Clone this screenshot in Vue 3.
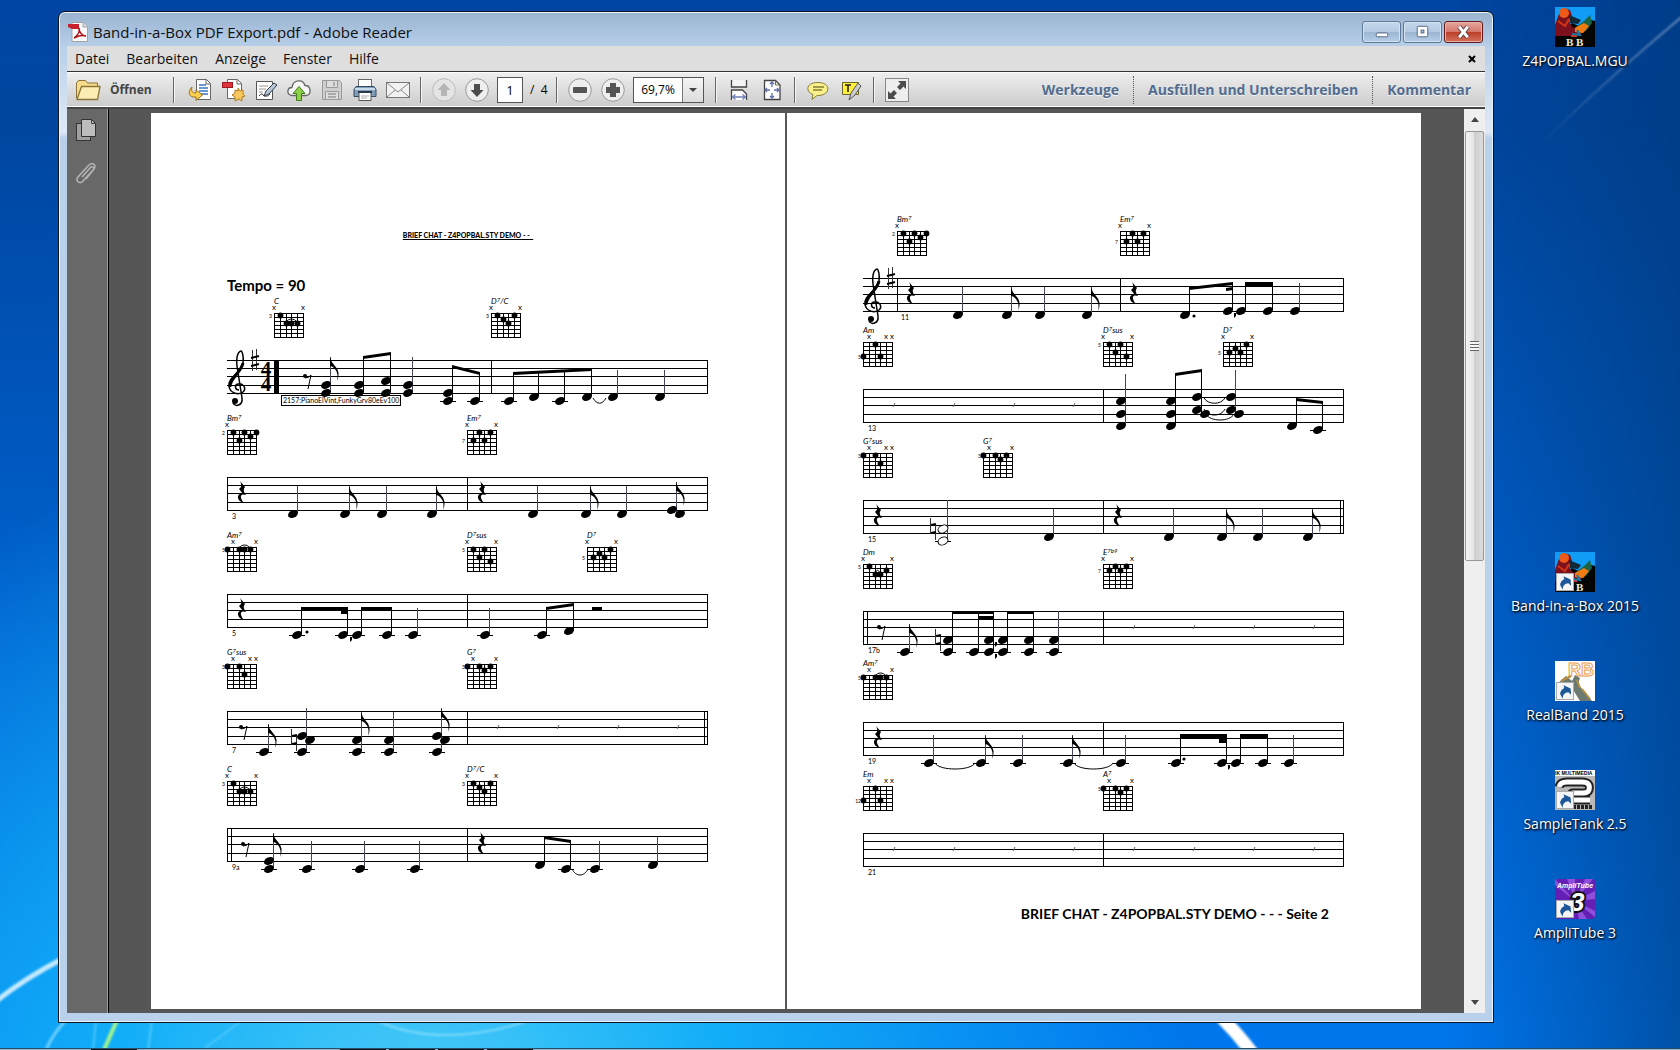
<script setup>
import { ref } from 'vue'

const pageNumber = ref('1')
const zoomLevel = ref('69,7%')

const menus = ['Datei', 'Bearbeiten', 'Anzeige', 'Fenster', 'Hilfe']
const panels = ['Werkzeuge', 'Ausfüllen und Unterschreiben', 'Kommentar']

const shortcuts = [
    { name: 'Z4POPBAL.MGU', icon: 'song', row: 1 },
    { name: 'Band-in-a-Box 2015', icon: 'biab', row: 6, link: true },
    { name: 'RealBand 2015', icon: 'realband', row: 7, link: true },
    { name: 'SampleTank 2.5', icon: 'sampletank', row: 8, link: true },
    { name: 'AmpliTube 3', icon: 'amplitube', row: 9, link: true }
]

// fretboard diagrams: x = muted strings, dots = [string, row]
const shapes = {
    'C': { fret: 3, x: [0, 5], dots: [[1, 0], [2, 2], [3, 2], [4, 2]], arc: [2, 4, 2] },
    'D7/C': { label: ['D', '7', '/C'], fret: 3, x: [0, 5], dots: [[1, 0], [2, 1], [3, 2], [4, 0]] },
    'Bm7': { label: ['Bm', '7'], fret: 2, x: [0], dots: [[1, 0], [2, 2], [3, 0], [4, 1], [5, 0]] },
    'Em7': { label: ['Em', '7'], fret: 7, fretRow: 2, x: [0, 5], dots: [[1, 2], [2, 0], [3, 2], [4, 0]] },
    'Am7': { label: ['Am', '7'], fret: 5, x: [1, 5], dots: [[0, 0], [2, 0], [3, 0], [4, 0]], arc: [2, 4, 0] },
    'D7sus': { label: ['D', '7', 'sus'], fret: 5, x: [0, 5], dots: [[1, 0], [2, 2], [3, 0], [4, 3]] },
    'D7': { label: ['D', '7'], fret: 5, fretRow: 2, x: [0, 5], dots: [[1, 2], [2, 1], [3, 2], [4, 0]] },
    'G7sus': { label: ['G', '7', 'sus'], fret: 3, x: [1, 4, 5], dots: [[0, 0], [2, 0], [3, 2]] },
    'G7': { label: ['G', '7'], fret: 3, x: [1, 5], dots: [[0, 0], [2, 0], [3, 1], [4, 0]] },
    'Am': { fret: 5, fretRow: 3, x: [1, 4, 5], dots: [[0, 3], [2, 0], [3, 3]] },
    'Dm': { fret: 5, x: [0, 5], dots: [[1, 0], [2, 2], [3, 2], [4, 1]], arc: [2, 3, 2] },
    'E7b9': { label: ['E', '7b9'], fret: 7, fretRow: 1, x: [0, 5], dots: [[1, 1], [2, 0], [3, 1], [4, 0]] },
    'Em': { fret: 12, fretRow: 3, x: [1, 4, 5], dots: [[0, 3], [2, 0], [3, 3]] },
    'A7': { label: ['A', '7'], fret: 5, x: [1, 5], dots: [[0, 0], [2, 0], [3, 1], [4, 0]] }
}

const strings = [0, 6, 12, 17, 23, 29]
const staffLines = [0, 8, 16, 25, 33]

// x = stem, steps counted down from the top line
const q = (x, steps, top, extra = {}) => ({ x, steps, top, ...extra })
const f = (x, steps, top, extra = {}) => ({ x, steps, top, flag: true, ...extra })
const b = (x, steps, top, extra = {}) => ({ x, steps, top, beamed: true, ...extra })
const stepY = (s) => Math.round(s * 4.1)
const label = (name) => shapes[name].label || [name]
const slashes = (start) => [31, 91, 151, 211].map((x) => x + start)

const leftPage = [
    {
        clef: true, time: true, bars: [264, 480], rests8: [80],
        chords: [[47, 'C'], [264, 'D7/C']],
        notes: [
            f(103, [6, 8], -3), b(136, [6, 8], -3), b(163, [5, 8], -7), q(185, [6, 8], -3),
            b(225, [8, 10], 6), b(252, [10], 13),
            b(286, [10], 14), b(311, [9], 12), b(337, [10], 11), b(364, [9], 9),
            q(390, [9], 10), q(437, [9], 10)
        ],
        beams: [[136, -4, 163, -8, 3], [225, 5, 252, 12, 3], [286, 12, 364, 8, 3]],
        ties: [[366, 379, 38, 7]]
    },
    {
        number: '3', bars: [0, 240, 480], rests4: [15, 255],
        chords: [[0, 'Bm7'], [240, 'Em7']],
        notes: [
            q(70, [9], 9), f(122, [9], 9), q(159, [9], 9), f(209, [9], 9),
            q(310, [9], 9), f(363, [9], 9), q(399, [9], 9), f(449, [8], 5, { right: [9] })
        ]
    },
    {
        number: '5', bars: [0, 240, 480], rests4: [15], halfRests: [365],
        chords: [[0, 'Am7'], [240, 'D7sus'], [360, 'D7']],
        notes: [
            b(74, [10], 13), b(120, [10], 13), b(134, [10], 13), b(164, [10], 13), q(190, [10], 14),
            q(262, [10], 14), b(319, [10], 14), b(346, [9], 9)
        ],
        beams: [[74, 13, 120, 13, 3], [114, 17, 120, 17, 3], [134, 13, 164, 13, 3], [319, 13, 346, 9, 3]],
        dots: [[80, 38]], commas: [[123, 43]]
    },
    {
        number: '7', bars: [0, 240, 477, 480], rests8: [16], naturals: [67],
        chords: [[0, 'G7sus'], [240, 'G7']],
        notes: [
            f(41, [10], 13), q(79, [6, 10], -3, { right: [7] }), f(134, [7, 10], 1), q(166, [7, 10], 1),
            f(214, [6, 10], -3, { right: [7] })
        ],
        slashes: slashes(240)
    },
    {
        number: '9a', bars: [0, 4, 240, 480], rests8: [18], rests4: [255],
        chords: [[0, 'C'], [240, 'D7/C']],
        notes: [
            f(46, [8, 10], 5), q(84, [10], 13), q(137, [10], 13), q(192, [10], 13),
            b(317, [9], 9), b(343, [10], 12), q(372, [10], 13), q(430, [9], 9)
        ],
        beams: [[317, 8, 343, 12, 3]],
        ties: [[345, 361, 41, 8]]
    }
]

const rightPage = [
    {
        clef: true, number: '11', numberX: 38, bars: [34, 257, 480], rests4: [48, 271],
        chords: [[34, 'Bm7'], [257, 'Em7']],
        notes: [
            q(99, [9], 9), f(148, [9], 9), q(181, [9], 9), f(228, [9], 9),
            b(326, [9], 9), b(369, [8], 4), b(382, [8], 4), b(409, [8], 4), q(436, [8], 5)
        ],
        beams: [[326, 9, 369, 4, 3], [363, 10, 369, 9, 3], [382, 4, 409, 4, 5]],
        dots: [[331, 38]], commas: [[371, 35]]
    },
    {
        number: '13', bars: [0, 240, 480],
        chords: [[0, 'Am'], [240, 'D7sus'], [360, 'D7']],
        notes: [
            q(262, [3, 6, 9], -15), b(312, [3, 6, 9], -15), b(338, [2, 5], -19, { right: [6] }),
            q(372, [2, 5], -19, { right: [6] }), b(433, [9], 10), b(459, [10], 13)
        ],
        beams: [[312, -16, 338, -20, 3], [433, 9, 459, 12, 3]],
        ties: [[341, 362, 9, 7], [341, 362, 20, 8], [343, 371, 25, 8]],
        slashes: slashes(0)
    },
    {
        number: '15', bars: [0, 240, 477, 480], rests4: [15, 255], naturals: [70],
        chords: [[0, 'G7sus'], [120, 'G7']],
        notes: [
            q(84, [7, 10], 0, { hollow: true }), q(190, [9], 9),
            q(310, [9], 9), f(363, [9], 9), q(399, [9], 9), f(449, [9], 9)
        ]
    },
    {
        number: '17b', bars: [0, 4, 240, 480], rests8: [18], naturals: [75],
        chords: [[0, 'Dm'], [240, 'E7b9']],
        notes: [
            f(46, [10], 13), b(89, [7, 10], 0), b(115, [10], 0), b(130, [7, 10], 0),
            b(144, [7, 10], 0), b(170, [7, 10], 0), q(195, [7, 10], 0)
        ],
        beams: [[89, 0, 130, 0, 3], [115, 5, 130, 5, 3], [144, 0, 170, 0, 3]],
        commas: [[132, 31], [132, 43]],
        slashes: slashes(240)
    },
    {
        number: '19', bars: [0, 240, 480], rests4: [15],
        chords: [[0, 'Am7']],
        notes: [
            q(70, [10], 13), f(122, [10], 13), q(159, [10], 13), f(209, [10], 13), q(262, [10], 13),
            b(317, [10], 12), b(363, [10], 12), b(377, [10], 12), b(404, [10], 12), q(430, [10], 13)
        ],
        beams: [[317, 12, 363, 12, 5], [356, 17, 363, 17, 4], [377, 12, 404, 12, 5]],
        ties: [[72, 112, 41, 8], [211, 250, 41, 8]],
        dots: [[321, 37]], commas: [[365, 43]]
    },
    {
        number: '21', bars: [0, 240, 480],
        chords: [[0, 'Em'], [240, 'A7']],
        notes: [],
        slashes: [...slashes(0), ...slashes(240)]
    }
]

const pages = [
    { id: 'first', systems: leftPage, height: 117 },
    { id: 'second', systems: rightPage, height: 111 }
]

const heads = (note) => [
    ...note.steps.map((s) => ({ x: note.x - 4, y: stepY(s), ledger: s > 9 })),
    ...(note.right || []).map((s) => ({ x: note.x + 4, y: stepY(s), ledger: s > 9 }))
]
const stemEnd = (note) => stepY(Math.max(...note.steps, ...(note.right || []))) - 1
const beamPoints = ([x1, y1, x2, y2, h]) =>
    `${x1},${y1} ${x2 + 1},${y2} ${x2 + 1},${y2 + h} ${x1},${y1 + h}`
const tiePath = ([x1, x2, y, h]) =>
    `M${x1} ${y} C${x1 + 4} ${y + h} ${x2 - 4} ${y + h} ${x2} ${y}`
const arcPath = (arc) => {
    const y = -46 + arc[2] * 4
    return `M${strings[arc[0]]} ${y} C${strings[arc[0]] + 3} ${y - 4} ${strings[arc[1]] - 3} ${y - 4} ${strings[arc[1]]} ${y}`
}
</script>

<template>
    <div class="desktop">
        <svg class="wallpaper" viewBox="0 0 1680 1050" preserveAspectRatio="none" aria-hidden="true">
            <defs>
                <linearGradient id="streak" x1="0" y1="1" x2="1" y2="0">
                    <stop offset="0" stop-color="#fff" stop-opacity="0" />
                    <stop offset="1" stop-color="#fff" stop-opacity=".45" />
                </linearGradient>
                <filter id="soft"><feGaussianBlur stdDeviation="1.2" /></filter>
            </defs>
            <g fill="none" filter="url(#soft)">
                <path d="M-5 1002 Q25 978 64 958" stroke="#c4eaff" stroke-width="5" />
                <path d="M46 1050 Q52 1035 66 1020" stroke="#6fd0ff" stroke-width="3" />
                <path d="M104 1050 L117 1020" stroke="#a6f58c" stroke-width="4" />
                <path d="M93 1050 L96 1020 M148 1050 L152 1020 M205 1048 L240 1022" stroke="#4cc6fa" stroke-width="2" />
                <path d="M380 1022 Q440 1048 525 1022" stroke="#7ad9fa" stroke-width="2" />
                <path d="M1222 1018 Q1238 1034 1253 1054" stroke="#fff" stroke-width="13" />
                <path d="M1540 145 Q1600 85 1690 10" stroke="url(#streak)" stroke-width="2" />
            </g>
        </svg>

        <main class="workspace">
            <section class="window">
                <header class="titlebar">
                    <svg class="titlebar__icon" viewBox="0 0 20 20">
                        <path d="M4 .5h11l4.500 4.500v14.500h-15.500z" fill="#fafafa" stroke="#a3a3a3" />
                        <path d="M15 .5v4.500h4.500" fill="#ddd" stroke="#a3a3a3" />
                        <path d="M0 2h11v5h-7l-4-2z" fill="#c6222b" />
                        <path d="M6 16c3-2 6-6 5-10c0 4 3 8 7 8c-4-1-8 0-12 2z" fill="none" stroke="#b01018" stroke-width="1.500" />
                    </svg>
                    <h1 class="titlebar__text">Band-in-a-Box PDF Export.pdf - Adobe Reader</h1>
                    <div class="titlebar__controls">
                        <button class="control" aria-label="Minimieren">
                            <svg viewBox="0 0 38 21"><rect x="13.500" y="11.500" width="12" height="4" rx="1" fill="#fff" stroke="#53657e" /></svg>
                        </button>
                        <button class="control" aria-label="Maximieren">
                            <svg viewBox="0 0 38 21"><rect x="13.500" y="4.500" width="11" height="11" rx="1" fill="#fff" stroke="#53657e" /><rect x="17.500" y="8.500" width="3" height="3" fill="#a9bfd8" stroke="#53657e" /></svg>
                        </button>
                        <button class="control control--close" aria-label="Schließen">
                            <svg viewBox="0 0 38 21"><path d="M14.500 5l9 11M23.500 5l-9 11" stroke="#5c3a41" stroke-width="5" /><path d="M14.500 5l9 11M23.500 5l-9 11" stroke="#fff" stroke-width="3" /></svg>
                        </button>
                    </div>
                </header>

                <nav class="menubar">
                    <button v-for="menu in menus" :key="menu" class="menubar__item">{{ menu }}</button>
                    <button class="menubar__close" aria-label="Dokument schließen">
                        <svg viewBox="0 0 8 8"><path d="M1 1l6 6M7 1l-6 6" stroke="#000" stroke-width="2" /></svg>
                    </button>
                </nav>

                <div class="toolbar">
                    <button class="toolbar__open">
                        <svg class="icon-folder" viewBox="0 0 26 22">
                            <path d="M1.500 19v-15l2-2.500h7l2 2.500h10v4" fill="#f6dd8d" stroke="#8c7436" />
                            <path d="M2 20.500l4.500-13h18.500l-2.500 13z" fill="#fbedb4" stroke="#8c7436" stroke-width="1.300" />
                        </svg>
                        Öffnen
                    </button>
                    <span class="sep sep--wide"></span>
                    <button class="tool" aria-label="Konvertieren">
                        <svg viewBox="0 0 24 24"><path d="M8.500 1.500h10l4 4v16h-14z" fill="#fff" stroke="#666" /><path d="M18 1.500v4.500h4.500" fill="none" stroke="#666" /><path d="M11 7h7M11 10h9M11 13h9M11 16h9" stroke="#3677c4" stroke-width="1.500" /><path d="M4 9c-5 5-3 11 4 10v3.500l6.500-5.500l-6.500-5v3c-4 0-5-2-4-6z" fill="#fbcf50" stroke="#9c6f12" /></svg>
                    </button>
                    <button class="tool" aria-label="PDF erstellen">
                        <svg viewBox="0 0 24 24"><path d="M6.500 1.500h10l4 4v15h-14z" fill="#fff" stroke="#666" /><path d="M16 1.500v4.500h4.500" fill="none" stroke="#666" /><rect x="1.500" y="4.500" width="10" height="5" fill="#dd3239" stroke="#a01820" /><path d="M17 10l2 3l3-1v4l2 2l-3 1v4l-3-2l-4 2v-4l-3-2l3-2v-3l3 1z" fill="#f8c85d" stroke="#b07c20" /></svg>
                    </button>
                    <button class="tool" aria-label="Unterschreiben">
                        <svg viewBox="0 0 24 24"><path d="M2.500 3.500h16v18h-16z" fill="#fff" stroke="#555" /><path d="M5 8h9M5 11h7M5 14h4" stroke="#999" /><path d="M5 18q3-4 5 0q4 1 6-2" stroke="#333" fill="none" /><path d="M20 5l3 2l-8 9l-5 2l2-5z" fill="#b7c7d8" stroke="#333d4c" /></svg>
                    </button>
                    <button class="tool" aria-label="Hochladen">
                        <svg viewBox="0 0 24 24"><path d="M5 17.500c-6-1-5-8 0-8c1-8 11-9 13-2c6 0 7 9 1 10z" fill="#f7f7f7" stroke="#666" stroke-width="1.300" /><path d="M12 8.500l6 7h-3.500v7h-5v-7h-3.500z" fill="#8fd04b" stroke="#3f7d18" /></svg>
                    </button>
                    <button class="tool" aria-label="Speichern" disabled>
                        <svg viewBox="0 0 24 24"><path d="M2.500 2.500h17l2 2v17h-19z" fill="#cfcfcf" stroke="#999" /><path d="M6.500 2.500h11v7h-11zM5.500 13.500h13v8h-13z" fill="#ddd" stroke="#999" /><path d="M14 4v4M8 16h8M8 19h8" stroke="#999" stroke-width="1.500" /></svg>
                    </button>
                    <button class="tool" aria-label="Drucken">
                        <svg viewBox="0 0 24 24"><rect x="5.500" y="1.500" width="13" height="9" fill="#fff" stroke="#666" /><path d="M3 8.500h18l2 3v7h-22v-7z" fill="#7f9db8" stroke="#344b60" /><path d="M2 11h20" stroke="#c9dbe9" stroke-width="2" /><path d="M6 14.500h12v8h-12z" fill="#fff" stroke="#555" /><path d="M5 14h14" stroke="#26384a" stroke-width="2" /><path d="M8 18h8M8 20h6" stroke="#aaa" /></svg>
                    </button>
                    <button class="tool" aria-label="E-Mail">
                        <svg viewBox="0 0 24 24"><rect x=".5" y="4.500" width="23" height="15" fill="#f2f2f2" stroke="#777" /><path d="M1 5l11 9l11-9M1 19l8-7M23 19l-8-7" fill="none" stroke="#888" /></svg>
                    </button>
                    <span class="sep"></span>
                    <button class="tool" aria-label="Vorherige Seite" disabled>
                        <svg viewBox="0 0 24 24"><circle cx="12" cy="12" r="11.300" fill="#e4e4e4" stroke="#bcbcbc" /><path d="M12 5l6.500 7h-3.500v6h-6v-6h-3.500z" fill="#b5b5b5" /></svg>
                    </button>
                    <button class="tool" aria-label="Nächste Seite">
                        <svg viewBox="0 0 24 24"><circle cx="12" cy="12" r="11.300" fill="#eee" stroke="#999" /><path d="M12 19l-6.500-7h3.500v-6h6v6h3.500z" fill="#4c4c4c" /></svg>
                    </button>
                    <input v-model="pageNumber" class="toolbar__page" aria-label="Seite">
                    <span class="toolbar__total">/&nbsp; 4</span>
                    <span class="sep"></span>
                    <button class="tool" aria-label="Verkleinern">
                        <svg viewBox="0 0 24 24"><circle cx="12" cy="12" r="11.300" fill="#eee" stroke="#999" /><rect x="5" y="9" width="14" height="6" rx="1" fill="#555" /></svg>
                    </button>
                    <button class="tool" aria-label="Vergrößern">
                        <svg viewBox="0 0 24 24"><circle cx="12" cy="12" r="11.300" fill="#eee" stroke="#999" /><path d="M9 5h6v4h4v6h-4v4h-6v-4h-4v-6h4z" fill="#555" /></svg>
                    </button>
                    <div class="zoom">
                        <input v-model="zoomLevel" class="zoom__input" aria-label="Zoom">
                        <button class="zoom__arrow" aria-label="Zoomstufen">
                            <svg viewBox="0 0 8 4"><path d="M0 0h8l-4 4z" fill="#444" /></svg>
                        </button>
                    </div>
                    <span class="sep sep--after-zoom"></span>
                    <button class="tool" aria-label="Seitenbreite">
                        <svg viewBox="0 0 24 24"><path d="M4.500 2v7h15v-7" fill="#f4f4f4" stroke="#444" stroke-width="1.300" /><path d="M4.500 22v-10h11l4 4v6" fill="#fff" stroke="#444" stroke-width="1.300" /><path d="M6 19h12M8.500 16.500l-3 2.500l3 2.500M15.500 16.500l3 2.500l-3 2.500" fill="none" stroke="#6d7fb5" stroke-width="1.300" /></svg>
                    </button>
                    <button class="tool" aria-label="Ganze Seite">
                        <svg viewBox="0 0 24 24"><path d="M4.500 2.500h11l4.500 4.500v14.500h-15.500z" fill="#fff" stroke="#444" stroke-width="1.300" /><path d="M15.500 2.500v4.500h4.500" fill="none" stroke="#587c3f" /><path d="M12 4v5M10 6l2-2l2 2M12 20v-5M10 18l2 2l2-2M5 12h5M7 10l-2 2l2 2M19 12h-5M17 10l2 2l-2 2" fill="none" stroke="#6070ac" stroke-width="1.300" /></svg>
                    </button>
                    <span class="sep"></span>
                    <button class="tool" aria-label="Notiz">
                        <svg viewBox="0 0 24 24"><path d="M12 4.500c13 0 13 12 1 13q-2 0-2 0l-5 4l1-5c-8-3-7-12 5-12z" fill="#fbf18b" stroke="#857c35" /><path d="M7 9h11M7 12h9" stroke="#857c35" stroke-width="1.300" /></svg>
                    </button>
                    <button class="tool" aria-label="Hervorheben">
                        <svg viewBox="0 0 24 24"><path d="M3.500 4.500h16v12h-16z" fill="#ffef3c" stroke="#6b6428" /><path d="M6 7h6M9 7v7" stroke="#222" stroke-width="1.500" /><path d="M19 5l3 3l-6 9l-6 5l2-7z" fill="#ccc" stroke="#555" /></svg>
                    </button>
                    <span class="sep"></span>
                    <button class="tool" aria-label="Vollbild">
                        <svg viewBox="0 0 24 24"><rect x=".5" y=".5" width="23" height="23" fill="#eee" stroke="#888" /><path d="M13 3h8v8l-2.500-2.500l-3.500 3.500l-3-3l3.500-3.500zM3 13l2.500 2.500l3.500-3.500l3 3l-3.500 3.500l2.500 2.500h-8z" fill="#4c4c4c" /></svg>
                    </button>
                    <div class="toolbar__panels">
                        <button v-for="panel in panels" :key="panel" class="toolbar__panel">{{ panel }}</button>
                    </div>
                </div>

                <div class="viewer">
                    <aside class="viewer__side">
                        <button class="side-btn" aria-label="Seitenminiaturen">
                            <svg viewBox="0 0 22 24"><rect x="1.500" y="5.500" width="14" height="17" fill="#a0a0a0" stroke="#333" /><path d="M6.500 1.500h10l4 4v13h-14z" fill="#bdbdbd" stroke="#333" /><path d="M16.500 1.500v4h4" fill="none" stroke="#444" /></svg>
                        </button>
                        <button class="side-btn" aria-label="Anlagen">
                            <svg viewBox="0 0 22 24"><path d="M7 16l8-9c2-3 5 0 3 2l-10 11c-3 4-8 0-5-4l10-11c4-5 9-1 6 3l-8 10" fill="none" stroke="#b5b5b5" stroke-width="1.500" /></svg>
                        </button>
                    </aside>

                    <div class="viewer__pages">
                        <article v-for="page in pages" :key="page.id" class="page" :class="`page--${page.id}`">
                            <template v-if="page.id === 'first'">
                                <h2 class="page__title">BRIEF CHAT - Z4POPBAL.STY DEMO - -&nbsp;&nbsp;</h2>
                                <p class="page__tempo">Tempo = 90</p>
                            </template>

                            <svg v-for="(sys, i) in page.systems" :key="i" class="system" :viewBox="`-76 -66 634 ${page.height}`">
                                <g v-for="[x, name] in sys.chords" :key="x" :transform="`translate(${x} 0)`">
                                    <text class="chord-name" x="0" y="-56">
                                        <tspan>{{ label(name)[0] }}</tspan><tspan v-if="label(name)[1]" class="chord-sup" dy="-2">{{ label(name)[1] }}</tspan><tspan v-if="label(name)[2]" dy="2">{{ label(name)[2] }}</tspan>
                                    </text>
                                    <text v-for="s in shapes[name].x" :key="s" class="mute" :x="strings[s]" y="-50">x</text>
                                    <g class="crisp">
                                        <path v-for="s in strings" :key="s" class="line" :d="`M${s + .5} -47v25`" />
                                        <path v-for="r in 7" :key="r" class="line" :d="`M0 ${-50.5 + r * 4}h30`" />
                                    </g>
                                    <circle v-for="([s, r], d) in shapes[name].dots" :key="d" :cx="strings[s] + .5" :cy="-44.500 + r * 4" r="2.900" />
                                    <path v-if="shapes[name].arc" class="tie" :d="arcPath(shapes[name].arc)" />
                                    <text class="fret" x="-2" :y="-42 + (shapes[name].fretRow || 0) * 4">{{ shapes[name].fret }}</text>
                                </g>

                                <g class="crisp">
                                    <path v-for="y in staffLines" :key="y" class="line" :d="`M0 ${y + .5}h481`" />
                                    <path v-for="x in sys.bars" :key="x" class="line" :d="`M${x + .5} 0v34`" />
                                </g>

                                <g v-if="sys.clef">
                                    <path class="clef" d="M12 30C8 30 7 25 11 24C16 23 20 28 16 32C12 35 3 34 2 26C1 17 14 13 16 3C17-4 15-9 14-9C10-8 9 0 10 6L15 38C16 46 8 47 6 43" />
                                    <path class="clef clef--thick" d="M3 27C2 19 14 13 16 3" />
                                    <circle cx="8" cy="41" r="3" />
                                    <path class="sharp" d="M25.500-10v21M29.500-11v21" />
                                    <path class="sharp sharp--bar" d="M24-2l8-2M24 6l8-2" />
                                </g>
                                <g v-if="sys.time">
                                    <text class="time" x="39" y="16">4</text>
                                    <text class="time" x="39" y="31">4</text>
                                    <rect x="47" y="0" width="5" height="34" />
                                    <rect class="track-box" x="54.500" y="35.500" width="119" height="10" />
                                    <text class="track" x="56" y="43">2157:PianoElVint,FunkyGrv80eEv100</text>
                                </g>

                                <g v-for="x in sys.rests4" :key="`r4${x}`" :transform="`translate(${x} 0)`">
                                    <path d="M-2 4L3 10Q0 13 4 18Q-2 16-1 21Q0 24 2 26Q-5 24-4 19Q-3 16 1 17L-3 12Q1 9-2 4z" />
                                </g>
                                <g v-for="x in sys.rests8" :key="`r8${x}`" :transform="`translate(${x} 0)`">
                                    <circle cx="-2" cy="16" r="2" />
                                    <path class="rest-stroke" d="M-2 18Q2 18 4 15L1 29" />
                                </g>
                                <rect v-for="x in sys.halfRests" :key="`h${x}`" :x="x" y="13" width="10" height="4" />
                                <g v-for="x in sys.naturals" :key="`n${x}`" :transform="`translate(${x} 0)`">
                                    <path class="sharp" d="M-2.500 18v16M2.500 24v16" />
                                    <path class="sharp sharp--bar" d="M-2 25l5-1M-2 33l5-1" />
                                </g>

                                <g v-for="note in sys.notes" :key="`s${note.x}`">
                                    <path class="stem crisp" :class="{ 'stem--beamed': note.beamed }" :d="`M${note.x + .5} ${note.top}V${stemEnd(note)}`" />
                                    <g v-for="(h, k) in heads(note)" :key="k" :transform="`translate(${h.x} ${h.y})`">
                                        <path v-if="h.ledger" class="line crisp" d="M-8 .5h16" />
                                        <ellipse rx="5.200" ry="3.700" transform="rotate(-26)" :class="{ hollow: note.hollow }" />
                                    </g>
                                    <path v-if="note.flag" :d="`M${note.x} ${note.top}q1 5 5 9q6 6 2 15q2 -8 -3 -13q-2 -2 -4 -2z`" />
                                </g>
                                <polygon v-for="(beam, k) in sys.beams" :key="`b${k}`" :points="beamPoints(beam)" />
                                <path v-for="(tie, k) in sys.ties" :key="`t${k}`" class="tie" :d="tiePath(tie)" />
                                <circle v-for="[x, y] in sys.dots" :key="`d${x}`" :cx="x" :cy="y" r="1.600" />
                                <path v-for="([x, y], k) in sys.commas" :key="`c${k}`" :d="`M${x} ${y}h2v3l-2 2z`" />
                                <path v-for="x in sys.slashes" :key="`l${x}`" class="slash" :d="`M${x - 1} 18l2-4`" />
                                <text v-if="sys.number" class="measure" :x="sys.numberX || 5" y="42">{{ sys.number }}</text>
                            </svg>

                            <p v-if="page.id === 'second'" class="page__footer">BRIEF CHAT - Z4POPBAL.STY DEMO - - - Seite 2</p>
                        </article>
                    </div>

                    <div class="scrollbar">
                        <button class="scrollbar__arrow" aria-label="Nach oben">
                            <svg viewBox="0 0 8 5"><path d="M0 5l4-5l4 5z" fill="#444" /></svg>
                        </button>
                        <div class="scrollbar__track"><div class="scrollbar__thumb"><i></i></div></div>
                        <button class="scrollbar__arrow" aria-label="Nach unten">
                            <svg viewBox="0 0 8 5"><path d="M0 0h8l-4 5z" fill="#444" /></svg>
                        </button>
                    </div>
                </div>
            </section>

            <div class="shortcuts">
                <a v-for="item in shortcuts" :key="item.name" href="#" class="shortcut" :class="`shortcut--row${item.row}`">
                    <svg class="shortcut__icon" viewBox="0 0 40 40">
                        <g v-if="item.icon === 'song' || item.icon === 'biab'">
                            <rect width="40" height="40" fill="#050505" />
                            <path d="M0 0h40v14l-8-2l-6 8l-9-4l-8 8l-9-6z" fill="#119cf5" />
                            <path d="M0 18l5-14l4-3l6 2l2 6l-4 4l5 8l8-2l4 6l-9 4h-21z" fill="#7c101c" />
                            <circle cx="9" cy="6" r="5" fill="#ee5a17" />
                            <path d="M14 8l12 5l-3 4l-8-1z" fill="#122a38" />
                            <path d="M21 20l8-6l6-6l2 8l-6 8l-9 3z" fill="#1c6446" />
                            <path d="M20 21l9-5l5 3l-6 7l-8-1z" fill="#f17b13" />
                            <path d="M3 14l7 5l4-7M16 29h6" stroke="#d23414" stroke-width="2" fill="none" />
                            <path d="M17 27l8 1l-3-5" stroke="#1976a8" fill="none" stroke-width="2" />
                            <text x="11" y="39" class="bb">B</text>
                            <text x="21" y="39" class="bb">B</text>
                        </g>
                        <g v-else-if="item.icon === 'realband'">
                            <rect width="40" height="40" fill="#fff" />
                            <text x="13" y="15" class="rb">RB</text>
                            <path d="M2 23l9-8l6 5l3-6l5 3l-2 6l14 17h-12l-8-13l-8 0z" fill="#6c7a72" />
                            <path d="M6 20l10-5M22 19l3 8M27 28l8 10" stroke="#b98b3d" stroke-width="2" />
                        </g>
                        <g v-else-if="item.icon === 'sampletank'">
                            <rect width="40" height="40" fill="#b9b9b9" />
                            <rect width="40" height="6" fill="#fff" />
                            <text x="0" y="5" class="ik">IK MULTIMEDIA</text>
                            <path d="M4 17q1-5 8-5h15q9 0 7 8q-1 3-6 3h-10q-3 0-2 7h19" fill="none" stroke="#222" stroke-width="9" />
                            <path d="M4 17q1-5 8-5h15q9 0 7 8q-1 3-6 3h-10q-3 0-2 7h19" fill="none" stroke="#fff" stroke-width="5" />
                            <path d="M18 37h20" stroke="#222" stroke-width="4" stroke-dasharray="3 1" />
                        </g>
                        <g v-else>
                            <rect width="40" height="40" rx="3" fill="#6420b4" />
                            <path d="M20 22L0 6v-6zM20 22L12 0h8zM20 22L30 0h8zM20 22L40 12v8zM20 22L40 32v6zM20 22L24 40h8z" fill="#a264ea" opacity=".7" />
                            <text x="2" y="9" class="amp">AmpliTube</text>
                            <text x="15" y="32" class="three">3</text>
                        </g>
                        <g v-if="item.link">
                            <rect x="1.500" y="21.500" width="17" height="17" fill="#f5f5f5" stroke="#aaa" />
                            <path d="M6 37q-4-8 4-10v-3l6 5l-1 6l-2-3q-6-1-7 5z" fill="#1d5799" transform="rotate(-14 10 30)" />
                        </g>
                    </svg>
                    <span class="shortcut__name">{{ item.name }}</span>
                </a>
            </div>
        </main>
        <footer class="taskbar"><i></i><i></i><i></i><i></i><i></i></footer>
    </div>
</template>

<style>
body {
    margin: 0;
}
</style>

<style scoped>
.desktop {
    position: relative;
    min-height: 100vh;
    display: flex;
    flex-direction: column;
    overflow: hidden;
    font-family: "Open Sans", "Noto Sans", sans-serif;
    background:
        radial-gradient(ellipse 46% 66% at 25% 106%, #4fcdf7 0%, #12aef8 40%, rgba(0, 152, 248, 0) 100%),
        linear-gradient(90deg, rgba(0, 60, 130, 0) 86%, rgba(0, 56, 120, .6) 100%),
        linear-gradient(180deg, #0045a3 0%, #0046a0 12%, #0062d0 60%, #0077ee 100%);
}

.wallpaper {
    position: absolute;
    inset: 0;
    width: 100%;
    height: 100%;
}

.workspace {
    position: relative;
    flex: 1;
    display: flex;
    padding: 0 0 25px 58px;
}

button {
    border: 0;
    padding: 0;
    margin: 0;
    background: none;
    font: inherit;
    color: inherit;
}

.window {
    flex: 1;
    min-width: 0;
    margin-top: 11px;
    box-sizing: border-box;
    display: flex;
    flex-direction: column;
    border: 1px solid #10151c;
    border-radius: 7px 7px 0 0;
    padding: 1px 8px 9px;
    background: linear-gradient(180deg, #99b3d0 0, #b9d0ea 36px, #dfeaf6 120px, #b9d1ea 126px);
    box-shadow: inset 0 0 0 1px #e8f3fc;
}

.titlebar {
    display: flex;
    align-items: center;
    height: 33px;
}

.titlebar__icon {
    width: 20px;
    height: 20px;
    margin-left: 1px;
    margin-top: 4px;
}

.titlebar__text {
    flex: 1;
    margin: 5px 0 0 5px;
    font-size: 15px;
    line-height: 20px;
    font-weight: 400;
    color: #101010;
}

.titlebar__controls {
    align-self: flex-start;
    display: flex;
    gap: 2px;
    margin: 8px 2px 0 0;
}

.control {
    box-sizing: border-box;
    width: 39px;
    height: 22px;
    border: 1px solid #5e7896;
    border-radius: 3px;
    background: linear-gradient(180deg, #c5d7ea 0, #b4cae2 48%, #9bb5d2 50%, #b5cde7 100%);
    box-shadow: inset 0 0 0 1px #d4e3f2;
}

.control svg {
    display: block;
    width: 100%;
    height: 100%;
}

.control--close {
    border-color: #641a1a;
    background: linear-gradient(180deg, #e3a59c 0, #d6796c 48%, #bb3d27 50%, #d2735c 100%);
    box-shadow: inset 0 0 0 1px #e9b3ab;
}

.menubar {
    display: flex;
    align-items: center;
    gap: 17px;
    height: 25px;
    padding: 0 9px 0 8px;
    background: #dedede;
    font-size: 14px;
    color: #111;
}

.menubar__close {
    margin-left: auto;
    width: 8px;
    height: 8px;
}

.menubar__close svg {
    display: block;
}

.toolbar {
    display: flex;
    align-items: center;
    height: 35px;
    padding-left: 8px;
    border-top: 1px solid #333;
    border-bottom: 2px solid #444;
    background: linear-gradient(180deg, #efefef, #cbcbcb);
    box-shadow: inset 0 1px #fff, inset 0 -1px #fff;
}

.toolbar__open {
    display: flex;
    align-items: center;
    gap: 9px;
    width: 87px;
    font-size: 12px;
    font-weight: 700;
    color: #444;
}

.toolbar__page {
    box-sizing: border-box;
    width: 26px;
    height: 26px;
    margin-left: 4px;
    padding: 0;
    border: 1px solid #555;
    background: #fff;
    text-align: center;
    font: 13px "Open Sans", sans-serif;
}

.toolbar__total {
    width: 27px;
    padding-left: 7px;
    box-sizing: border-box;
    font-size: 12px;
    white-space: nowrap;
}

.toolbar__panels {
    display: flex;
    margin-left: auto;
    font-size: 14px;
    font-weight: 700;
    color: #526d90;
}

.toolbar__panel {
    height: 28px;
    padding: 0 14px;
    white-space: nowrap;
    text-shadow: 0 1px #f4f4f4;
}

.toolbar__panel + .toolbar__panel {
    border-left: 1px dotted #555;
}

.icon-folder {
    width: 26px;
    height: 22px;
}

.sep {
    flex: none;
    width: 1px;
    height: 26px;
    margin: 0 6px;
    background: #666;
    box-shadow: 1px 0 #f5f5f5;
}

.sep--wide {
    margin: 0 9px 0 11px;
}

.sep--after-zoom {
    margin-left: 11px;
}

.tool {
    flex: none;
    width: 33px;
    height: 30px;
    display: grid;
    place-items: center;
}

.tool svg {
    width: 24px;
    height: 24px;
}

.zoom {
    display: flex;
    box-sizing: border-box;
    width: 71px;
    height: 26px;
    margin-left: 4px;
    border: 1px solid #555;
    background: #fff;
}

.zoom__input {
    flex: 1;
    min-width: 0;
    border: 0;
    padding: 0;
    text-align: center;
    font: 12px "Open Sans", sans-serif;
}

.zoom__arrow {
    width: 21px;
    border-left: 1px solid #777;
    background: linear-gradient(180deg, #f5f5f5, #dcdcdc);
}

.zoom__arrow svg {
    display: block;
    width: 8px;
    height: 4px;
    margin: auto;
}

.viewer {
    flex: 1;
    display: flex;
    background: #565656;
}

.viewer__side {
    width: 41px;
    display: flex;
    flex-direction: column;
    align-items: center;
    gap: 19px;
    padding: 9px 2px 0 0;
    box-sizing: border-box;
    background: #686868;
    border-right: 1px solid #a0a0a0;
    margin-right: 1px;
    box-shadow: 1px 0 #000;
}

.viewer__pages {
    flex: 1;
    display: flex;
    gap: 2px;
    padding: 4px 43px 4px 42px;
}

.side-btn {
    width: 22px;
    height: 24px;
}

.side-btn svg {
    display: block;
}

.page {
    flex: 1;
    min-width: 0;
    background: #fff;
    font-family: Lato, sans-serif;
    color: #000;
}

.page--second {
    box-sizing: border-box;
    padding-top: 99px;
}

.page__title {
    width: max-content;
    margin: 0 auto;
    padding-top: 118px;
    font-size: 7px;
    line-height: 8px;
    font-weight: 900;
    text-decoration: underline;
}

.page__tempo {
    margin: 37px 0 0 76px;
    font-size: 15px;
    line-height: 18px;
    font-weight: 700;
}

.page__footer {
    margin: 26px 92px 0 0;
    text-align: right;
    font-size: 14px;
    line-height: 20px;
    font-weight: 700;
}

.system {
    display: block;
    width: 100%;
    overflow: visible;
}

.crisp {
    shape-rendering: crispEdges;
}

.line {
    stroke: #000;
    stroke-width: 1px;
    fill: none;
}

.stem {
    stroke: #4a4358;
    stroke-width: 1px;
}

.stem--beamed {
    stroke: #000;
}

.tie,
.rest-stroke {
    fill: none;
    stroke: #000;
    stroke-width: 1px;
}

.clef {
    fill: none;
    stroke: #000;
    stroke-width: 1.5px;
}

.clef--thick {
    stroke-width: 3px;
}

.sharp {
    fill: none;
    stroke: #333;
    stroke-width: 1px;
}

.sharp--bar {
    stroke: #000;
    stroke-width: 2px;
}

.hollow {
    fill: #fff;
    stroke: #000;
    stroke-width: 1px;
}

.slash {
    stroke: #666;
    stroke-width: 1px;
}

.chord-name {
    font-size: 8px;
    font-style: italic;
}

.chord-sup {
    font-size: 6px;
}

.mute {
    font-size: 8px;
    text-anchor: middle;
}

.fret {
    font-size: 5px;
    text-anchor: end;
}

.measure {
    font-size: 7px;
}

.time {
    font-family: "Liberation Serif", serif;
    font-size: 21px;
    font-weight: 700;
    text-anchor: middle;
}

.track {
    font-size: 7px;
}

.track-box {
    fill: #fff;
    stroke: #000;
}

.scrollbar {
    width: 21px;
    display: flex;
    flex-direction: column;
    background: #efefef;
}

.scrollbar__arrow {
    height: 21px;
}

.scrollbar__arrow svg {
    display: block;
    width: 8px;
    height: 5px;
    margin: auto;
}

.scrollbar__track {
    flex: 1;
    display: grid;
    grid-template-rows: 1fr 1fr;
}

.scrollbar__thumb {
    margin: 1px 1px 0;
    box-sizing: border-box;
    display: grid;
    place-items: center;
    border: 1px solid #979797;
    border-radius: 2px;
    background: linear-gradient(90deg, #f4f4f4 0, #e6e6e6 45%, #cfcfcf 50%, #dcdcdc 100%);
}

.scrollbar__thumb i {
    width: 9px;
    height: 10px;
    background: repeating-linear-gradient(180deg, #666 0 1px, #f5f5f5 1px 3px);
}

.shortcuts {
    width: 162px;
    padding: 7px 24px 0 0;
    display: grid;
    grid-template-rows: repeat(9, 109px);
    align-content: start;
}

.shortcut {
    display: flex;
    flex-direction: column;
    align-items: center;
    gap: 4px;
    color: #fff;
    text-decoration: none;
}

.shortcut--row1 {
    grid-row: 1;
}

.shortcut--row6 {
    grid-row: 6;
}

.shortcut--row7 {
    grid-row: 7;
}

.shortcut--row8 {
    grid-row: 8;
}

.shortcut--row9 {
    grid-row: 9;
}

.shortcut__icon {
    width: 40px;
    height: 40px;
}

.shortcut__name {
    font-size: 14px;
    line-height: 20px;
    white-space: nowrap;
    text-shadow: 1px 1px 2px #000, 0 1px 3px #001c48;
}

.bb {
    font: 700 11px "Liberation Serif", serif;
    fill: #f2edcc;
}

.rb {
    font: 700 18px "Liberation Sans", sans-serif;
    fill: #fff;
    stroke: #ea9a4b;
    stroke-width: 1px;
}

.ik {
    font: 700 5px "Liberation Sans", sans-serif;
}

.amp {
    font: italic 700 7px "Liberation Sans", sans-serif;
    fill: #fff;
}

.three {
    font: italic 700 26px "Liberation Sans", sans-serif;
    fill: #fff;
    stroke: #111;
    stroke-width: 4px;
    paint-order: stroke;
}

.taskbar {
    position: relative;
    height: 1px;
    display: flex;
    gap: 3px;
    padding-left: 91px;
    border-top: 1px solid #27506f;
    background: #8fb4cc;
}

.taskbar i {
    width: 46px;
    background: #111;
}

.taskbar i:first-child {
    margin-right: 200px;
}
</style>
